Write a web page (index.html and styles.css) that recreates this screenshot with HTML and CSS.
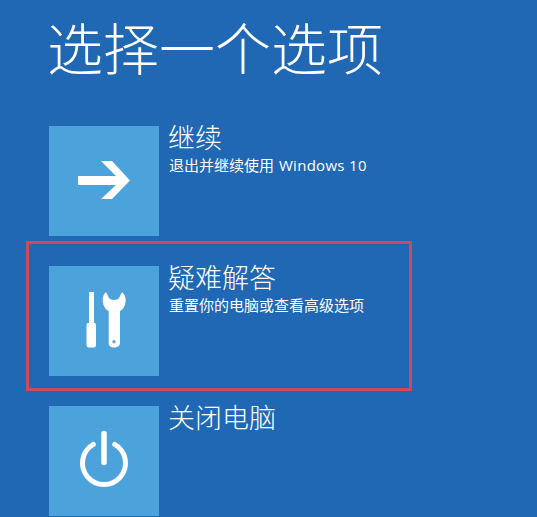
FILE: index.html
```html
<!DOCTYPE html>
<html lang="zh-CN">
<head>
<meta charset="utf-8">
<title>选择一个选项</title>
<link rel="stylesheet" href="styles.css">
</head>
<body>
<main class="screen">
  <h1 class="heading">选择一个选项</h1>
  <ul class="options">
    <li class="option">
      <div class="tile">
        <svg class="icon" viewBox="0 0 110 110" aria-hidden="true"><path d="M29 50H67L52 35H63L81 54.500L63 73H52L67 59H29z" fill="#fff"/></svg>
      </div>
      <div class="copy">
        <div class="title">继续</div>
        <div class="desc">退出并继续使用 <span class="latin">Windows 10</span></div>
      </div>
    </li>
    <li class="option is-selected">
      <div class="tile">
        <svg class="icon" viewBox="0 0 110 110" aria-hidden="true">
          <path d="M40 26h5v31h.5a1.500 1.500 0 0 1 1.500 1.500V79a2.500 2.500 0 0 1-2.500 2.500h-5A2.500 2.500 0 0 1 37.500 79V58.500A1.500 1.500 0 0 1 39 57h1z" fill="#fff"/>
          <path fill-rule="evenodd" d="M57 26C54.500 28 53.700 31 53.700 34C53.700 39 56 43 59.700 45V77C59.700 80 62 81.500 65 81.500C68.500 81.500 71 80 71 77V45C74.500 43 76.700 39 76.700 34C76.700 31 75.500 28 73 26L70 32C68.500 34.500 61.500 34.500 60 32z" fill="#fff"/>
          <circle cx="65" cy="75.700" r="1.700" fill="#6f9fcf"/>
        </svg>
      </div>
      <div class="copy">
        <div class="title">疑难解答</div>
        <div class="desc">重置你的电脑或查看高级选项</div>
      </div>
      <span class="highlight"></span>
    </li>
    <li class="option">
      <div class="tile">
        <svg class="icon" viewBox="0 0 110 110" aria-hidden="true">
          <path d="M44.300 38.400A21.500 21.500 0 1 0 65.700 38.400" fill="none" stroke="#fff" stroke-width="5" stroke-linecap="round"/>
          <path d="M55 27.500V56.500" fill="none" stroke="#fff" stroke-width="5.500" stroke-linecap="round"/>
        </svg>
      </div>
      <div class="copy">
        <div class="title">关闭电脑</div>
      </div>
    </li>
  </ul>
</main>
</body>
</html>
```
FILE: styles.css
```css
html, body {
  margin: 0;
  padding: 0;
  height: 100%;
  overflow: hidden;
}
.screen {
  box-sizing: border-box;
  height: 517px;
  padding: 13px 0 0 49px;
  background: #2067b4;
  color: #fff;
  font-family: "Noto Sans CJK SC", "Liberation Sans", sans-serif;
}
.heading {
  margin: 0 0 47px -2px;
  font-size: 56px;
  line-height: 66px;
  font-weight: 300;
  letter-spacing: 0;
}
.options {
  margin: 0;
  padding: 0;
  list-style: none;
  display: flex;
  flex-direction: column;
  gap: 30px;
}
.option {
  position: relative;
  display: flex;
  gap: 9px;
}
.tile {
  flex: none;
  width: 110px;
  height: 110px;
  background: #4ca3dc;
}
.icon {
  display: block;
  width: 110px;
  height: 110px;
}
.copy {
  display: flex;
  flex-direction: column;
  margin-top: -6px;
}
.title {
  font-size: 27px;
  line-height: 34px;
  font-weight: 300;
}
.desc {
  padding-left: 1px;
  font-family: "Open Sans", "Noto Sans CJK SC", sans-serif;
  font-size: 15px;
  line-height: 22px;
}
.latin {
  margin-left: 1px;
  letter-spacing: 0.3px;
}
.highlight {
  position: absolute;
  left: -23px;
  top: -25px;
  width: 386px;
  height: 150px;
  box-sizing: border-box;
  border: 3px solid #cf4a5c;
}
```
